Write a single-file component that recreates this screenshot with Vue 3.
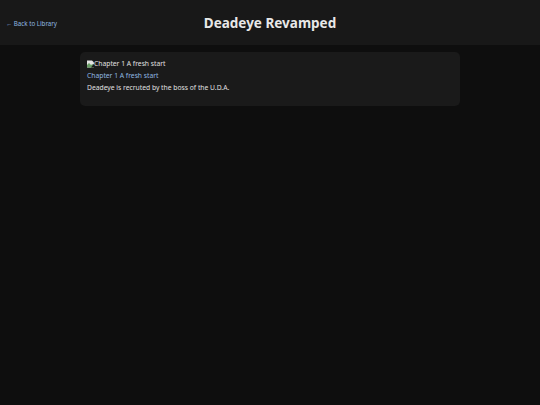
<template>
  <div class="page">
    <header class="top-bar">
      <a class="back-link" href="#">← Back to Library</a>
      <h1 class="book-title">Deadeye Revamped</h1>
    </header>

    <main class="chapter-list">
      <div class="chapter-card">
        <div class="cover">
          <svg class="broken-img" width="7" height="8" viewBox="0 0 14 16">
            <path d="M0 1h10l4 4v10H0z" fill="#e4e4e4" />
            <path d="M0 15V10l4-4 4 4 3-2 3 3v4z" fill="#6a9e66" />
            <path d="M8 15L14 7v8z" fill="#1a1a1a" />
          </svg>
          <span>Chapter 1 A fresh start</span>
        </div>
        <a class="chapter-link" href="#">Chapter 1 A fresh start</a>
        <p class="chapter-desc">Deadeye is recruted by the boss of the U.D.A.</p>
      </div>
    </main>
  </div>
</template>

<script setup>
</script>

<style>
html,
body {
  margin: 0;
  background: #0e0e0e;
}
</style>

<style scoped>
.page {
  min-height: 405px;
  background: #0e0e0e;
  color: #e0e0e0;
  font-family: "Noto Sans", sans-serif;
}

.top-bar {
  position: relative;
  height: 45px;
  background: #181818;
  display: flex;
  align-items: center;
  justify-content: center;
}

.back-link {
  position: absolute;
  left: 6px;
  top: 17px;
  font-size: 6.19px;
  line-height: 13px;
  color: #90b8e0;
  text-decoration: none;
}

.book-title {
  margin: 0;
  font-size: 13.5px;
  font-weight: 700;
  color: #e8e8e8;
}

.chapter-list {
  width: 380px;
  margin: 7px auto 0;
}

.chapter-card {
  background: #1a1a1a;
  border-radius: 5px;
  padding: 6px 7px 12px;
  font-size: 6.75px;
  line-height: 12px;
}

.cover {
  display: flex;
  align-items: center;
  height: 12px;
}

.chapter-link {
  display: block;
  color: #90b8e0;
  text-decoration: none;
}

.chapter-desc {
  margin: 0;
  color: #e0e0e0;
}
</style>
